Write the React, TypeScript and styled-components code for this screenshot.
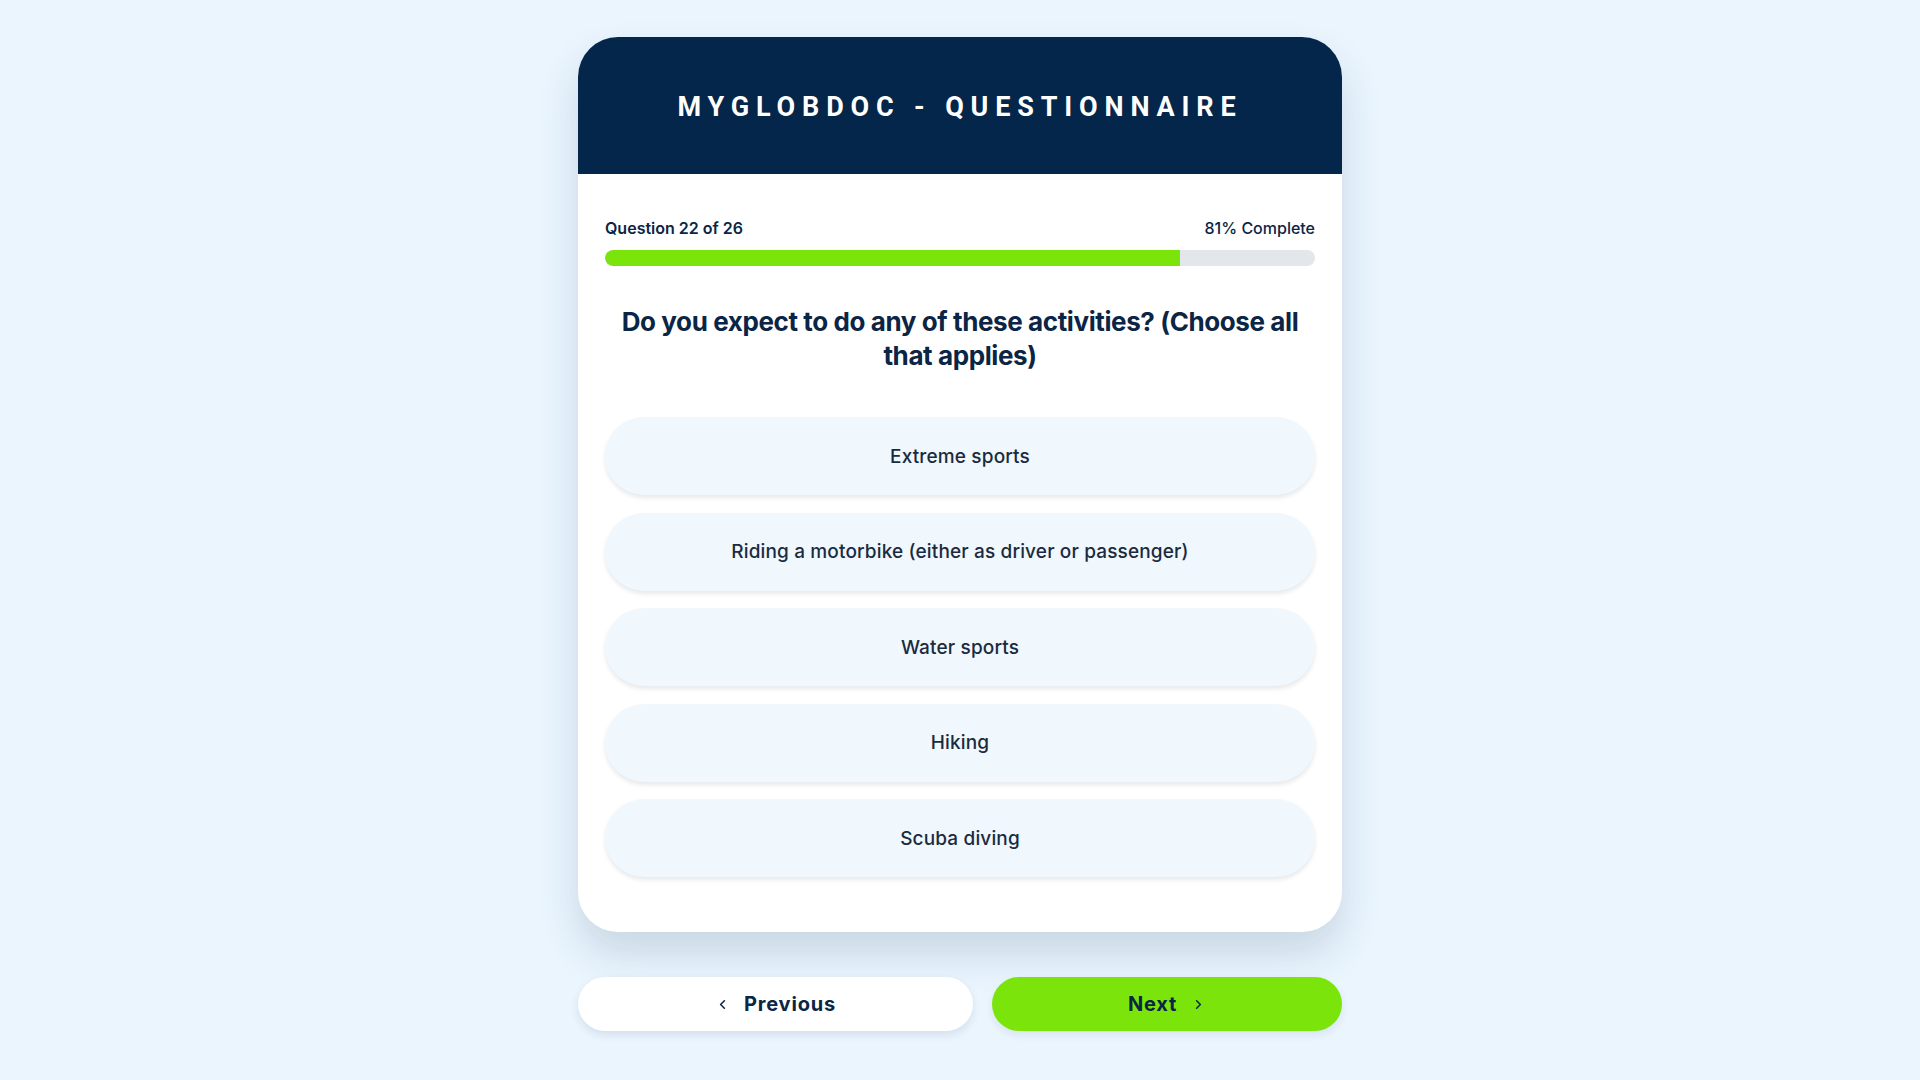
import React, { useState } from "react";
import styled, { createGlobalStyle } from "styled-components";
import { ChevronLeft, ChevronRight } from "lucide-react";

const GlobalStyle = createGlobalStyle`
  html, body {
    margin: 0;
    padding: 0;
    background: #eaf5fe;
  }
  body {
    font-family: Inter, "Noto Sans", sans-serif;
    color: #0b2545;
  }
`;

const ACTIVITIES = [
  "Extreme sports",
  "Riding a motorbike (either as driver or passenger)",
  "Water sports",
  "Hiking",
  "Scuba diving",
];

const App = (): JSX.Element => {
  const [picked, setPicked] = useState<string[]>([]);
  const current = 22;
  const total = 26;
  const percent = 81;

  const toggle = (item: string): void => {
    setPicked((prev) =>
      prev.includes(item) ? prev.filter((p) => p !== item) : [...prev, item]
    );
  };

  return (
    <Page>
      <GlobalStyle />
      <Column>
        <Card>
          <Header>
            <Title>MYGLOBDOC - QUESTIONNAIRE</Title>
          </Header>
          <Body>
            <ProgressMeta>
              <Step>
                Question {current} of {total}
              </Step>
              <Percent>{percent}% Complete</Percent>
            </ProgressMeta>
            <Track>
              <Fill style={{ width: `${percent}%` }} />
            </Track>
            <Question>
              Do you expect to do any of these activities? (Choose all that
              applies)
            </Question>
            <Options>
              {ACTIVITIES.map((item) => (
                <Option
                  key={item}
                  $active={picked.includes(item)}
                  onClick={() => toggle(item)}
                >
                  {item}
                </Option>
              ))}
            </Options>
          </Body>
        </Card>
        <Nav>
          <PrevButton>
            <ChevronLeft size={15} strokeWidth={2.5} />
            Previous
          </PrevButton>
          <NextButton>
            Next
            <ChevronRight size={15} strokeWidth={2.5} />
          </NextButton>
        </Nav>
      </Column>
    </Page>
  );
};

/**
 * Styles
 */
const Page = styled.div`
  min-height: 100vh;
  display: flex;
  justify-content: center;
  padding-top: 37px;
  box-sizing: border-box;
`;

const Column = styled.div`
  width: 764px;
  display: flex;
  flex-direction: column;
  gap: 45px;
`;

const Card = styled.div`
  background: #fff;
  border-radius: 40px;
  overflow: hidden;
  box-shadow: 0 22px 40px rgba(30, 60, 90, 0.16);
`;

const Header = styled.div`
  height: 137px;
  background: #03264a;
  display: flex;
  align-items: center;
  justify-content: center;
  padding-top: 2px;
  box-sizing: border-box;
`;

const Title = styled.h1`
  margin: 0;
  color: #fff;
  font-family: Roboto, Inter, sans-serif;
  font-size: 27px;
  font-weight: 700;
  letter-spacing: 6.85px;
`;

const Body = styled.div`
  padding: 45px 27px 55px;
`;

const ProgressMeta = styled.div`
  display: flex;
  justify-content: space-between;
  align-items: center;
  line-height: 18px;
`;

const Step = styled.span`
  font-size: 16px;
  font-weight: 600;
`;

const Percent = styled.span`
  font-size: 16px;
  font-weight: 500;
`;

const Track = styled.div`
  margin-top: 13px;
  height: 16px;
  border-radius: 8px;
  background: #e3e6ea;
  overflow: hidden;
`;

const Fill = styled.div`
  height: 100%;
  border-radius: 8px 0 0 8px;
  background: #7be50b;
`;

const Question = styled.h2`
  margin: 39px 10px 0;
  text-align: center;
  font-size: 26px;
  font-weight: 700;
  line-height: 34px;
  letter-spacing: -0.4px;
  color: #0b2545;
`;

const Options = styled.div`
  margin-top: 44px;
  display: flex;
  flex-direction: column;
  gap: 17.5px;
`;

const Option = styled.button<{ $active: boolean }>`
  height: 78px;
  border: none;
  border-radius: 39px;
  background: ${({ $active }) => ($active ? "#dff3c8" : "#f0f7fd")};
  box-shadow: 0 3px 4px rgba(20, 40, 70, 0.1);
  font-family: Inter, sans-serif;
  font-size: 19px;
  font-weight: 500;
  letter-spacing: 0.15px;
  color: #1a2b40;
  cursor: pointer;
`;

const Nav = styled.div`
  display: flex;
  gap: 19px;
  height: 54px;
`;

const NavButton = styled.button`
  display: flex;
  align-items: center;
  justify-content: center;
  gap: 14px;
  border: none;
  border-radius: 27px;
  font-family: Inter, sans-serif;
  font-size: 20px;
  font-weight: 700;
  letter-spacing: 0.8px;
  color: #0b2545;
  cursor: pointer;
`;

const PrevButton = styled(NavButton)`
  flex: 1;
  background: #fff;
  box-shadow: 0 4px 8px rgba(20, 40, 70, 0.1);
`;

const NextButton = styled(NavButton)`
  width: 350px;
  background: #7be50b;
  box-shadow: 0 4px 8px rgba(20, 40, 70, 0.08);
`;

export default App;
